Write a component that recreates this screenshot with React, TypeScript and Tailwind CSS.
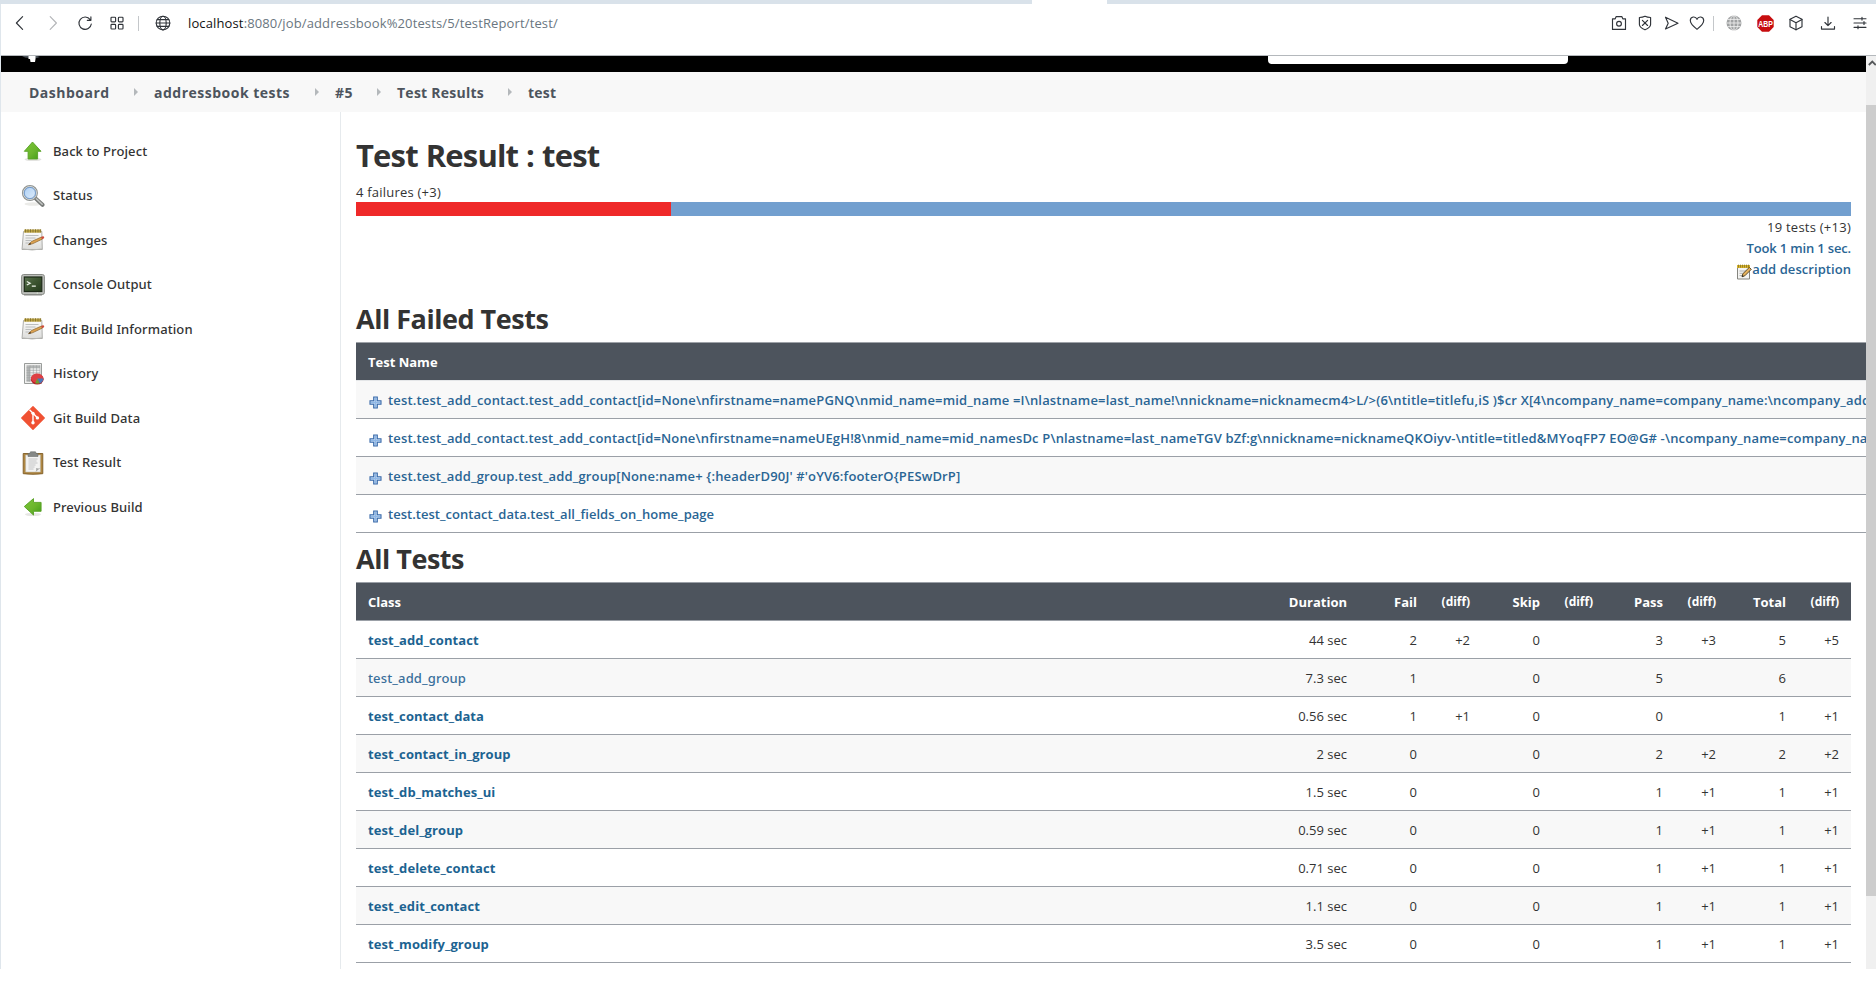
import type { ReactNode } from "react";

/* ---------- browser toolbar icons ---------- */

function Line({ children, className = "text-[#30343a]" }: { children: ReactNode; className?: string }) {
  return (
    <svg
      viewBox="0 0 16 16"
      className={`h-4 w-4 shrink-0 ${className}`}
      fill="none"
      stroke="currentColor"
      strokeWidth="1.15"
      strokeLinecap="round"
      strokeLinejoin="round"
    >
      {children}
    </svg>
  );
}

function GlobeIcon() {
  return (
    <Line>
      <circle cx="8" cy="8" r="6.8" />
      <ellipse cx="8" cy="8" rx="3.2" ry="6.8" />
      <path d="M1.2 8h13.6M2.2 4.6h11.6M2.2 11.4h11.6" />
    </Line>
  );
}

function Toolbar() {
  return (
    <div className="flex h-[51px] items-start bg-white pl-[11px] pr-2">
      <div className="flex h-[38px] items-center">
        <Line>
          <path d="M10.6 1.7 4.4 8l6.2 6.3" />
        </Line>
        <Line className="ml-[17px] text-[#b3b5b8]">
          <path d="M5.2 1.7 11.4 8l-6.2 6.3" />
        </Line>
        <Line className="ml-4 text-[#30343a]">
          <path d="M13.2 4.6A6.2 6.2 0 1 0 14.3 9M13.9 1.9v3.4h-3.6" />
        </Line>
        <Line className="ml-4 text-[#30343a]">
          <rect x="2" y="2.2" width="4.6" height="4.6" rx="0.8" />
          <rect x="9.4" y="2.2" width="4.6" height="4.6" rx="0.8" />
          <rect x="2" y="9.4" width="4.6" height="4.6" rx="0.8" />
          <rect x="9.4" y="9.4" width="4.6" height="4.6" rx="0.8" />
        </Line>
        <span className="ml-[13px] mr-4 h-[15px] w-px bg-[#c4c7ca]" />
        <GlobeIcon />
        <span className="ml-[17px] text-[13px] leading-[38px] tracking-[0.13px] text-[#6a7680]">
          <span className="text-[#111]">localhost</span>
          :8080/job/addressbook%20tests/5/testReport/test/
        </span>
      </div>

      <div className="ml-auto flex h-[38px] items-center">
        <Line>
          <path d="M1.5 3.8h2.7l1-2.200h5.600l1 2.200h2.700v10.600h-13z" />
          <circle cx="8" cy="8.700" r="2.400" />
        </Line>
        <Line className="ml-2.5 text-[#30343a]">
          <path d="M8 1.300c2 1 3.700 1.200 5.600 1.200v7c0 2.500-3 4.200-5.600 5.300-2.600-1.100-5.600-2.800-5.600-5.300v-7C4.300 2.500 6 2.300 8 1.300z" />
          <path d="m5.400 5.300 5.200 5.200m0-5.200-5.200 5.200" />
        </Line>
        <Line className="ml-[11px] text-[#30343a]">
          <path d="M1.500 2.200 14 8.200 1.500 14l2.700-5.800z" />
        </Line>
        <Line className="ml-[9px] text-[#30343a]">
          <path d="M8 14.300C4.500 11.600 1.300 9.200 1.300 5.600c0-4.400 5.400-4.800 6.700-1.200 1.300-3.600 6.700-3.200 6.700 1.200 0 3.600-3.200 6-6.700 8.700z" />
        </Line>
        <span className="ml-2 mr-3 h-[15px] w-px bg-[#c4c7ca]" />
        <svg viewBox="0 0 16 16" className="h-4 w-4 shrink-0">
          <circle cx="8" cy="8" r="7.500" fill="#a0a2a3" />
          <g fill="none" stroke="#eeeeee" strokeWidth="0.9">
            <path d="M.5 8h15M1.500 4.400h13M1.500 11.600h13M8 .5v15" />
            <ellipse cx="8" cy="8" rx="4" ry="7.500" />
          </g>
        </svg>
        <svg viewBox="0 0 17 17" className="ml-[15px] h-[17px] w-[17px] shrink-0">
          <path d="M5 .3h7L16.700 5v7L12 16.700H5L.3 12V5z" fill="#c70d0f" />
          <text x="8.500" y="11.500" textAnchor="middle" textLength="14.500" lengthAdjust="spacingAndGlyphs" fontFamily="Liberation Sans, sans-serif" fontWeight="700" fontSize="8.500" fill="#fff">
            ABP
          </text>
        </svg>
        <Line className="ml-[14px] text-[#30343a]">
          <path d="M8 1.200 14 4.300v7.400l-6 3.100-6-3.100V4.300z" />
          <path d="m2 4.500 6 3.200 6-3.200M8 7.700v7" />
        </Line>
        <Line className="ml-4 text-[#30343a]">
          <path d="M8 2v8.600M4.900 7.500 8 10.600l3.100-3.100M1.500 11.500v2.600h13v-2.600" />
        </Line>
        <Line className="ml-4 text-[#30343a]">
          <path d="M2 3.700h12M2 8h12M2 12.300h12M10 2.300v2.800M12 6.600v2.800M6 10.900v2.800" />
        </Line>
      </div>
    </div>
  );
}

/* ---------- side panel icons ---------- */

function Defs() {
  return (
    <svg className="absolute h-0 w-0">
      <defs>
        <linearGradient id="green" x1="0" y1="0" x2="1" y2="1">
          <stop offset="0" stopColor="#7cc83a" />
          <stop offset="0.55" stopColor="#6bb52c" />
          <stop offset="1" stopColor="#3f9a17" />
        </linearGradient>
        <linearGradient id="lens" x1="0" y1="0" x2="1" y2="1">
          <stop offset="0" stopColor="#a9cdf3" />
          <stop offset="1" stopColor="#e3effc" />
        </linearGradient>
        <linearGradient id="sheet" x1="0" y1="0" x2="0" y2="1">
          <stop offset="0" stopColor="#fcfcfb" />
          <stop offset="1" stopColor="#dcdcda" />
        </linearGradient>
        <linearGradient id="screen" x1="0" y1="0" x2="1" y2="1">
          <stop offset="0" stopColor="#5b7350" />
          <stop offset="0.5" stopColor="#3c5430" />
          <stop offset="1" stopColor="#263b1e" />
        </linearGradient>
      </defs>
    </svg>
  );
}

function Pic({ children }: { children: ReactNode }) {
  return (
    <svg viewBox="0 0 24 24" className="h-6 w-6 shrink-0">
      {children}
    </svg>
  );
}

const UpIcon = () => (
  <Pic>
    <ellipse cx="12" cy="20.500" rx="8.500" ry="1.600" fill="#e3e3e0" />
    <path d="M11.500 3 20 12.300h-3.400V20H7.100v-7.700H3.300z" fill="url(#green)" stroke="#57a025" strokeWidth="0.900" strokeLinejoin="round" />
  </Pic>
);

const LeftIcon = () => (
  <Pic>
    <ellipse cx="12" cy="19.500" rx="8" ry="1.600" fill="#e6e6e3" />
    <path d="M3.300 11.500 12.500 3.600v3.800h7.600v8.900h-7.600v3.800z" fill="url(#green)" stroke="#57a025" strokeWidth="0.900" strokeLinejoin="round" />
  </Pic>
);

const SearchIcon = () => (
  <Pic>
    <ellipse cx="12" cy="20" rx="8.500" ry="1.700" fill="#ebebe8" />
    <path d="m14.800 14.600 6.700 6.200" stroke="#777a78" strokeWidth="4" strokeLinecap="round" />
    <path d="m15.400 14.800 5.800 5.400" stroke="#c3c5c3" strokeWidth="1.500" strokeLinecap="round" />
    <circle cx="8.900" cy="9" r="7" fill="url(#lens)" stroke="#8e9290" strokeWidth="2" />
    <circle cx="8.900" cy="9" r="6.600" fill="none" stroke="#d9dbda" strokeWidth="0.900" />
    <circle cx="8.900" cy="9" r="5.600" fill="none" stroke="#6a94c8" strokeWidth="0.900" />
  </Pic>
);

const NotepadIcon = () => (
  <Pic>
    <path d="M2.500 3.500h18.300l.5 18H1z" fill="url(#sheet)" stroke="#9a9a97" strokeWidth="0.800" />
    <path d="M1.200 20.800q10 2.500 20 0" fill="none" stroke="#b9b9b6" strokeWidth="0.900" />
    <path d="M3.200 1.500h17v3.200h-17z" fill="#bfa544" />
    <path d="M4.500 1.200v3.200M7 1.200v3.200M9.500 1.200v3.200M12 1.200v3.200M14.500 1.200v3.200M17 1.200v3.200M19.300 1.200v3.200" stroke="#786a2c" strokeWidth="0.800" />
    <path d="M4.500 7.500h13M4.500 10h10M4.500 12.500h6M4.500 15h4" stroke="#b6b8b8" strokeWidth="0.900" />
    <path d="m7.500 16.800 3-3.300 10-4.500 1 2-9.600 4.600z" fill="#dda251" stroke="#8b6329" strokeWidth="0.700" />
    <path d="m7.500 16.800 1.500-2 1.200 1.500z" fill="#40362a" />
    <path d="m20 8.900 1.900-.6c1.400.1 1.700 1.500.8 2.100l-1.500.8z" fill="#cd4c3c" />
  </Pic>
);

const ConsoleIcon = () => (
  <Pic>
    <rect x="0.600" y="1.500" width="22.800" height="20" rx="2" fill="#bdbfbb" stroke="#7d807b" strokeWidth="0.900" />
    <path d="M3 22h18" stroke="#8a8c88" strokeWidth="1" />
    <rect x="3.300" y="4" width="17.500" height="14.500" fill="url(#screen)" stroke="#1d2a18" strokeWidth="1.200" />
    <path d="m5.800 8.500 3.400 1.700-3.400 1.900M10.800 13.200h4" fill="none" stroke="#eef3ea" strokeWidth="1.200" />
    <circle cx="16.300" cy="20" r="0.600" fill="#e8ffe0" />
  </Pic>
);

const HistoryIcon = () => (
  <Pic>
    <path d="M3.500 1.500h17v20h-17z" fill="#f0f0ef" stroke="#8f9290" strokeWidth="0.900" />
    <path d="M5.500 3.300h13.500v2.500H5.500zM5.500 5.800H9v14H5.500z" fill="#b4b6b6" />
    <path d="M5.500 5.800H19M5.500 8.300H19M5.500 10.800H19M5.500 13.300H19M5.500 15.800h9M5.500 18.300h6M9 3.300V20M12.300 3.300V18M15.600 3.300V14M19 3.300V14" stroke="#9b9e9e" strokeWidth="0.600" />
    <ellipse cx="16.200" cy="17.200" rx="6.400" ry="5.300" fill="#b51f25" />
    <ellipse cx="16.200" cy="16.300" rx="6.200" ry="4.700" fill="#de3f43" />
    <path d="M16.200 16.500h6.200c0 2.500-1.600 4.200-3.800 4.800z" fill="#4c78b8" />
    <path d="m16.200 16.500 2.400 4.800c-1.500.4-3.300.4-4.400 0z" fill="#6aa133" />
  </Pic>
);

const GitIcon = () => (
  <Pic>
    <path d="M12 .8 23.200 12 12 23.200.8 12z" fill="#f05133" stroke="#f05133" strokeWidth="1.400" strokeLinejoin="round" />
    <path d="m8.500 3.700 3 3M12 7.500v9M12.300 7.500l4 4.200" stroke="#fff" strokeWidth="1.400" />
    <circle cx="12" cy="7.300" r="1.600" fill="#fff" />
    <circle cx="12" cy="16.800" r="1.700" fill="#fff" />
    <circle cx="16.400" cy="11.900" r="1.700" fill="#fff" />
  </Pic>
);

const ClipboardIcon = () => (
  <Pic>
    <path d="M2.200 2.500h19.600v20.200q-9.800 1.200-19.600 0z" fill="#b08742" stroke="#7e5c26" strokeWidth="0.900" />
    <path d="M4.600 4h14.800v17H4.600z" fill="#f3f3f2" stroke="#b9b4a5" strokeWidth="0.500" />
    <path d="M7.500 8h9M7.500 10h8M7.500 12h9M7.500 14h7M7.500 16h6M7.500 18h5" stroke="#c0c1c1" strokeWidth="0.900" />
    <path d="M14.500 21c.8-1.500.8-2.500.6-4 1.500.5 2.900.5 4.300 0z" fill="#a9aaa9" />
    <path d="M9.500.8h5l.8 1.700H17v3H7v-3h1.700z" fill="#858886" stroke="#6b6e6c" strokeWidth="0.600" />
  </Pic>
);

const tasks = [
  { label: "Back to Project", Icon: UpIcon },
  { label: "Status", Icon: SearchIcon },
  { label: "Changes", Icon: NotepadIcon },
  { label: "Console Output", Icon: ConsoleIcon },
  { label: "Edit Build Information", Icon: NotepadIcon },
  { label: "History", Icon: HistoryIcon },
  { label: "Git Build Data", Icon: GitIcon },
  { label: "Test Result", Icon: ClipboardIcon },
  { label: "Previous Build", Icon: LeftIcon },
];

function SidePanel() {
  return (
    <nav className="w-[340px] shrink-0 border-r border-[#e6eaed] pl-5 pt-[17px]">
      {tasks.map(({ label, Icon }) => (
        <a key={label} className="flex h-[44.5px] items-center gap-2">
          <Icon />
          <span className="font-['Noto_Sans'] text-[13px] font-medium tracking-[0.1px] text-[#333]">{label}</span>
        </a>
      ))}
    </nav>
  );
}

/* ---------- breadcrumbs ---------- */

function Arrow({ className }: { className: string }) {
  return (
    <svg viewBox="0 0 4 8" className={`h-2 w-1 shrink-0 ${className}`}>
      <path d="M0 0l4 4-4 4z" fill="#b4b8bb" />
    </svg>
  );
}

function Breadcrumbs() {
  return (
    <div className="flex h-10 items-center whitespace-nowrap bg-[#f8f8f8] pl-7 text-[14px] font-bold text-[#4d545d]">
      <span className="w-[81px] tracking-[0.5px]">Dashboard</span>
      <Arrow className="ml-[24px] mr-[16px]" />
      <span className="w-[136px] tracking-[0.5px]">addressbook tests</span>
      <Arrow className="ml-[25px] mr-[16px]" />
      <span className="w-[19px] tracking-[0.4px]">#5</span>
      <Arrow className="ml-[23px] mr-[16px]" />
      <span className="w-[88px] tracking-[0.25px]">Test Results</span>
      <Arrow className="ml-[23px] mr-4" />
      <span className="tracking-[0.25px]">test</span>
    </div>
  );
}

/* ---------- report ---------- */

const failed = [
  {
    name: "test.test_add_contact.test_add_contact[id=None\\nfirstname=namePGNQ\\nmid_name=mid_name =I\\nlastname=last_name!\\nnickname=nicknamecm4>L/>(6\\ntitle=titlefu,iS )$cr X[4\\ncompany_name=company_name:\\ncompany_address=",
    tracking: "tracking-[0.17px]",
  },
  {
    name: "test.test_add_contact.test_add_contact[id=None\\nfirstname=nameUEgH!8\\nmid_name=mid_namesDc P\\nlastname=last_nameTGV bZf:g\\nnickname=nicknameQKOiyv-\\ntitle=titled&MYoqFP7 EO@G# -\\ncompany_name=company_name",
    tracking: "tracking-[0.16px]",
  },
  {
    name: "test.test_add_group.test_add_group[None:name+ {:headerD90J' #'oYV6:footerO{PESwDrP]",
    tracking: "tracking-[0.15px]",
  },
  {
    name: "test.test_contact_data.test_all_fields_on_home_page",
    tracking: "tracking-[0.03px]",
  },
];

function PlusIcon() {
  return (
    <svg viewBox="0 0 13 13" className="mt-[5px] h-[13px] w-[13px] shrink-0">
      <path d="M4.700 1h3.600v3.700H12v3.600H8.300V12H4.700V8.300H1V4.700h3.700z" fill="#b9d3f1" stroke="#3a6aa9" strokeWidth="1.100" />
      <path d="M6.500 2v9M2 6.500h9" stroke="#8fb7e6" strokeWidth="1" />
    </svg>
  );
}

function EditIcon() {
  return (
    <svg viewBox="0 0 16 16" className="mt-1 h-4 w-4 shrink-0">
      <path d="M1.500 2h12v13h-12z" fill="#f4f4f2" stroke="#85857f" strokeWidth="1" />
      <path d="M1 1h13v3H1z" fill="#d9b52d" />
      <path d="M2.500.6v3M4.500.6v3M6.500.6v3M8.500.6v3M10.500.6v3M12.500.6v3" stroke="#7a6a22" strokeWidth="0.700" />
      <path d="M3.500 7h7M3.500 9.300h4M3.500 11.600h3" stroke="#a9aaa8" strokeWidth="0.900" />
      <path d="m6 12.800.8-3L13.300 3.400l2 1.900-6.500 6.500z" fill="#e5b25d" stroke="#4e3d1c" strokeWidth="0.900" />
      <path d="m6 12.800.5-1.800 1.300 1.200z" fill="#222" />
    </svg>
  );
}

const results = [
  ["test_add_contact", "44 sec", "2", "+2", "0", "", "3", "+3", "5", "+5"],
  ["test_add_group", "7.3 sec", "1", "", "0", "", "5", "", "6", ""],
  ["test_contact_data", "0.56 sec", "1", "+1", "0", "", "0", "", "1", "+1"],
  ["test_contact_in_group", "2 sec", "0", "", "0", "", "2", "+2", "2", "+2"],
  ["test_db_matches_ui", "1.5 sec", "0", "", "0", "", "1", "+1", "1", "+1"],
  ["test_del_group", "0.59 sec", "0", "", "0", "", "1", "+1", "1", "+1"],
  ["test_delete_contact", "0.71 sec", "0", "", "0", "", "1", "+1", "1", "+1"],
  ["test_edit_contact", "1.1 sec", "0", "", "0", "", "1", "+1", "1", "+1"],
  ["test_modify_group", "3.5 sec", "0", "", "0", "", "1", "+1", "1", "+1"],
];

const headings = ["Class", "Duration", "Fail", "(diff)", "Skip", "(diff)", "Pass", "(diff)", "Total", "(diff)"];

const columns = "grid grid-cols-[892px_99px_70px_53px_70px_53px_70px_53px_70px_53px] items-center pt-0.5";

function FailedTests() {
  return (
    <div className="mt-[3px] w-[1510px] overflow-hidden border-t border-[#9ea2a8]">
      <div className="flex h-[38px] items-center border-b border-[#e4e6e8] bg-[#4d545d] pl-3 pt-0.5 font-bold text-white">Test Name</div>
      {failed.map((f, i) => (
        <div
          key={i}
          className={`flex h-[38px] items-center gap-[6px] whitespace-pre border-b border-[#9ba0a7] pl-[13px] ${i % 2 === 0 ? "bg-[#f8f8f8]" : "bg-white"}`}
        >
          <PlusIcon />
          <a className={`pt-[3px] font-semibold text-[#2a6594] ${f.tracking}`}>{f.name}</a>
        </div>
      ))}
    </div>
  );
}

function AllTests() {
  return (
    <div className="mt-[3px] border-t border-[#9ba0a7]">
      <div className={`${columns} h-[38px] border-b border-[#9ba0a7] bg-[#4d545d] font-bold text-white`}>
        {headings.map((h, i) => (
          <span
            key={i}
            className={
              i === 0 ? "pl-3" : h === "(diff)" ? "-mt-px text-right text-[12px] font-bold tracking-[-0.05px]" : "text-right"
            }
          >
            {h}
          </span>
        ))}
      </div>
      {results.map((row, r) => (
        <div key={row[0]} className={`${columns} h-[38px] border-b border-[#9ba0a7] ${r % 2 ? "bg-[#f8f8f8]" : "bg-white"}`}>
          {row.map((cell, i) =>
            i === 0 ? (
              <a
                key={i}
                className={
                  r === 1
                    ? "pl-3 font-['Noto_Sans'] font-medium tracking-[0.14px] text-[#3a6f9b]"
                    : "pl-3 font-bold tracking-[0.07px] text-[#1c6391]"
                }
              >
                {cell}
              </a>
            ) : (
              <span key={i} className="text-right text-[#333]">
                {cell}
              </span>
            ),
          )}
        </div>
      ))}
    </div>
  );
}

function Report() {
  return (
    <main className="min-w-0 flex-1 overflow-hidden pl-[15px] pt-[23px] text-[13px]">
      <div className="w-[1495px]">
        <h1 className="text-[31px] font-bold leading-10 tracking-[-0.85px] text-[#333] [word-spacing:0.8px]">Test Result : test</h1>
        <div className="mt-[7px] leading-5 tracking-[0.22px] text-[#333]">4 failures (+3)</div>
        <div className="flex h-3.5 bg-[#729fcf]">
          <div className="w-[315px] bg-[#ef2929]" />
        </div>
        <div className="flex flex-col items-end">
          <span className="h-[22px] leading-[22px] tracking-[0.25px] text-[#333]">19 tests (+13)</span>
          <a className="h-[21px] font-semibold leading-[21px] tracking-[-0.16px] text-[#2a6594]">Took 1 min 1 sec.</a>
          <a className="flex h-[21px] items-center font-semibold leading-[21px] tracking-[0.06px] text-[#2a6594]">
            <EditIcon />
            add description
          </a>
        </div>
        <h2 className="mt-[19px] text-[27px] font-bold leading-10 tracking-[-0.47px] text-[#333]">All Failed Tests</h2>
        <FailedTests />
        <h2 className="mt-1.5 text-[27px] font-bold leading-10 tracking-[-0.47px] text-[#333]">All Tests</h2>
        <AllTests />
      </div>
    </main>
  );
}

export default function App() {
  return (
    <div className="flex h-[987px] w-[1876px] flex-col overflow-hidden bg-white font-['Open_Sans',sans-serif]">
      <Defs />
      <div className="flex h-1 shrink-0 bg-[#d9e2ea] pl-[1032px]">
        <div className="w-[75px] bg-white" />
      </div>
      <div className="flex h-[965px] shrink-0 flex-col border-l border-[#dfe6ec]">
        <Toolbar />
        <div className="h-px shrink-0 bg-[#b4b8bc]" />
        <div className="flex min-h-0 flex-1">
          <div className="flex w-[1865px] flex-col">
            <div className="flex h-4 shrink-0 bg-black">
              <svg viewBox="0 0 20 7" className="ml-[21px] h-[7px] w-5">
                <path d="M0 0h15l3 1-5 1.500-6-.5-4-.5z" fill="#4b5258" />
                <path d="M6.500 0h7v3l-.5 3H8.500L8 3H6.500z" fill="#fff" />
              </svg>
              <div className="ml-[1226px] h-2 w-[300px] rounded-b-[4px] bg-white" />
            </div>
            <Breadcrumbs />
            <div className="flex min-h-0 flex-1">
              <SidePanel />
              <Report />
            </div>
          </div>
          <div className="flex flex-1 flex-col items-end overflow-hidden bg-[#f0f0f0]">
            <svg viewBox="0 0 8 6" className="mt-1 h-[6px] w-2 shrink-0">
              <path d="M.8 5 4.300 1.500 7.800 5" fill="none" stroke="#55585a" strokeWidth="1.800" />
            </svg>
            <div className="mt-[39px] h-[791px] w-full bg-[#cdcdcd]" />
          </div>
        </div>
      </div>
    </div>
  );
}
